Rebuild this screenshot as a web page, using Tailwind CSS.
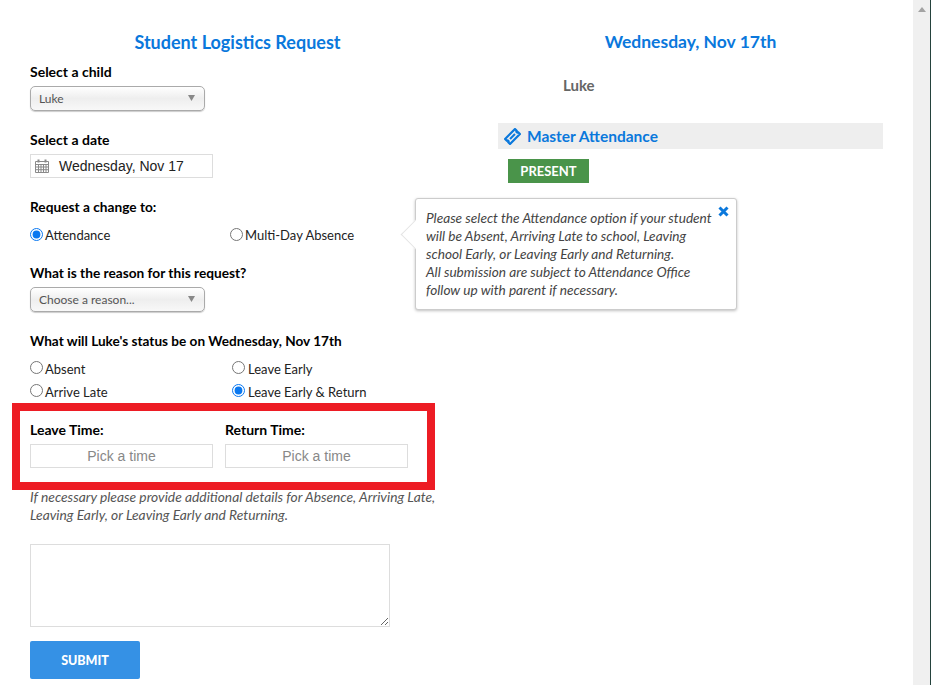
<!DOCTYPE html>
<html lang="en">
<head>
    <meta charset="UTF-8">
    <title>Student Logistics Request</title>
    <script src="https://cdn.jsdelivr.net/npm/@tailwindcss/browser@4"></script>
</head>
<body class="h-[685px] overflow-hidden bg-white font-['Lato','Noto_Sans',sans-serif] text-[13px] text-[#333]">
<div class="flex h-[685px]">
    <main class="relative flex w-[913px]">
        <!-- left column: the form -->
        <form class="w-[450px] pl-[30px] pt-[32px]">
            <h1 class="w-[415px] text-center text-[18px] leading-[20px] font-bold text-[#0a78dc]">Student Logistics Request</h1>

            <label class="mt-[11px] block text-[14px] leading-[18px] font-bold text-black">Select a child</label>
            <div class="relative mt-[5px] h-[25px] w-[175px]">
                <select class="h-full w-full appearance-none rounded-[5px] border border-[#aaa] bg-gradient-to-b from-white via-[#eee] to-[#f8f8f8] pl-[8px] text-[12px] text-[#555] shadow-[0_1px_1px_#ccc]">
                    <option>Luke</option>
                </select>
                <svg class="pointer-events-none absolute top-[9px] right-[10px]" width="7" height="6" viewBox="0 0 7 6"><path d="M0 0h7L3.5 6z" fill="#888"/></svg>
            </div>

            <label class="mt-[20px] block text-[14px] leading-[18px] font-bold text-black">Select a date</label>
            <div class="mt-[5px] flex h-[24px] w-[183px] items-center border border-[#ddd] pl-[4px] font-['Liberation_Sans',sans-serif] text-[14px] text-[#222]">
                <svg width="14" height="14" viewBox="0 0 14 14" fill="none" stroke="#8a8a8a" stroke-width="1">
                    <path d="M.5 2.5h13v11H.5zM.5 5.5h13M.5 8h13M.5 10.7h13M3.5 5.5v8M6 5.5v8M8.500 5.500v8M11 5.500v8"/>
                    <path d="M3.500 .5v3M10.500 .5v3" stroke-width="2"/>
                </svg>
                <span class="ml-[10px]">Wednesday, Nov 17</span>
            </div>

            <p class="mt-[20px] text-[13.700px] leading-[18px] font-bold text-black">Request a change to:</p>
            <div class="mt-[11px] flex h-[18px] items-center">
                <label class="flex w-[200px] items-center gap-[2px] text-[#222]"><input type="radio" name="kind" checked class="m-0 -mt-[3px] size-[13px] accent-[#0a78f0]">Attendance</label>
                <label class="flex items-center gap-[2px] text-[#222]"><input type="radio" name="kind" class="m-0 -mt-[3px] size-[13px]">Multi-Day Absence</label>
            </div>

            <p class="mt-[19px] text-[13.700px] leading-[18px] font-bold text-black">What is the reason for this request?</p>
            <div class="relative mt-[5px] h-[25px] w-[175px]">
                <select class="h-full w-full appearance-none rounded-[5px] border border-[#aaa] bg-gradient-to-b from-white via-[#eee] to-[#f8f8f8] pl-[8px] text-[12px] text-[#555] shadow-[0_1px_1px_#ccc]">
                    <option>Choose a reason...</option>
                </select>
                <svg class="pointer-events-none absolute top-[9px] right-[10px]" width="7" height="6" viewBox="0 0 7 6"><path d="M0 0h7L3.5 6z" fill="#888"/></svg>
            </div>

            <p class="mt-[20px] text-[13.600px] leading-[18px] font-bold text-black">What will Luke's status be on Wednesday, Nov 17th</p>
            <div class="mt-[10px] grid w-[380px] grid-cols-[202px_1fr] gap-y-[5px] leading-[18px] text-[#222]">
                <label class="flex items-center gap-[2px]"><input type="radio" name="status" class="m-0 -mt-[3px] size-[13px]">Absent</label>
                <label class="flex items-center gap-[3px]"><input type="radio" name="status" class="m-0 -mt-[3px] size-[13px]">Leave Early</label>
                <label class="flex items-center gap-[2px]"><input type="radio" name="status" class="m-0 -mt-[3px] size-[13px]">Arrive Late</label>
                <label class="flex items-center gap-[3px]"><input type="radio" name="status" checked class="m-0 -mt-[3px] size-[13px] accent-[#0a78f0]">Leave Early &amp; Return</label>
            </div>

            <div class="mt-[2px] -ml-[18px] h-[87px] w-[423px] border-[8px] border-[#ed1c24] pt-[10px] pl-[10px]">
                <div class="flex gap-[12px]">
                    <div>
                        <label class="block text-[14px] leading-[18px] font-bold text-black">Leave Time:</label>
                        <input type="text" placeholder="Pick a time" class="mt-[5px] h-[24px] w-[183px] border border-[#ddd] text-center font-['Liberation_Sans',sans-serif] text-[14px] placeholder:text-[#888]">
                    </div>
                    <div>
                        <label class="block text-[14px] leading-[18px] font-bold text-black">Return Time:</label>
                        <input type="text" placeholder="Pick a time" class="mt-[5px] h-[24px] w-[183px] border border-[#ddd] text-center font-['Liberation_Sans',sans-serif] text-[14px] placeholder:text-[#888]">
                    </div>
                </div>
            </div>

            <p class="mt-[-2px] w-[412px] text-[13.800px] leading-[18px] text-[#555] italic">If necessary please provide additional details for Absence, Arriving Late, Leaving Early, or Leaving Early and Returning.</p>

            <textarea class="mt-[20px] block h-[83px] w-[360px] border border-[#ddd]"></textarea>

            <button type="button" class="mt-[14px] h-[38px] w-[110px] rounded-[2px] bg-[#3591e5] pt-[2px] text-[12.500px] font-black text-white">SUBMIT</button>
        </form>

        <!-- right column: the day summary -->
        <section class="ml-[48px] w-[385px] pt-[32px]">
            <h2 class="text-center text-[17.500px] leading-[20px] font-bold text-[#0a78dc]">Wednesday, Nov 17th</h2>
            <p class="mt-[23px] ml-[65px] text-[15px] leading-[20px] font-bold text-[#666]">Luke</p>
            <div class="mt-[28px] flex h-[26px] items-center bg-[#eee] pl-[6px]">
                <svg width="17" height="17" viewBox="0 0 17 17" fill="none" stroke="#0a78dc">
                    <g transform="rotate(-45 8.500 8.500)">
                        <path d="M1.500 5h14v2.500a1 1 0 0 0 0 2V12h-14V9.500a1 1 0 0 0 0-2z" stroke-width="2.200" stroke-linejoin="round"/>
                        <path d="M5 7.500h7v2H5z" fill="#0a78dc" stroke="none"/>
                    </g>
                </svg>
                <span class="ml-[6px] pt-[2px] text-[15.500px] font-bold text-[#0a78dc]">Master Attendance</span>
            </div>
            <div class="mt-[10px] ml-[10px] flex h-[24px] w-[81px] items-center justify-center bg-[#4a944a] pt-[2px] text-[13px] font-bold text-white">PRESENT</div>
        </section>

        <!-- popover over the columns -->
        <div class="absolute top-[198px] left-[415px] h-[112px] w-[322px] rounded-[3px] border border-[#ccc] bg-white pt-[10px] pl-[10px] text-[13.650px] leading-[18px] text-[#444] italic shadow-[0_1px_3px_rgba(0,0,0,0.25)]">
            <span class="absolute top-[25px] -left-[11px] size-[21px] rotate-45 border-b border-l border-[#e4e4e4] bg-white"></span>
            <svg class="absolute top-[7px] right-[7px]" width="11" height="11" viewBox="0 0 11 11"><path d="M1.500 1.500l8 8M9.500 1.500l-8 8" stroke="#0a78dc" stroke-width="3"/></svg>
            <p class="relative">Please select the Attendance option if your student<br>will be Absent, Arriving Late to school, Leaving<br>school Early, or Leaving Early and Returning.<br>All submission are subject to Attendance Office<br>follow up with parent if necessary.</p>
        </div>
    </main>

    <!-- page scrollbar, then the sliver of desktop behind the window -->
    <aside class="flex w-[18px] justify-center border-r border-[#24423c] bg-[#f0f0f0] pt-[7px]">
        <svg width="8" height="5" viewBox="0 0 8 5"><path d="M4 0l4 5H0z" fill="#a3a3a3"/></svg>
    </aside>
</div>
</body>
</html>
